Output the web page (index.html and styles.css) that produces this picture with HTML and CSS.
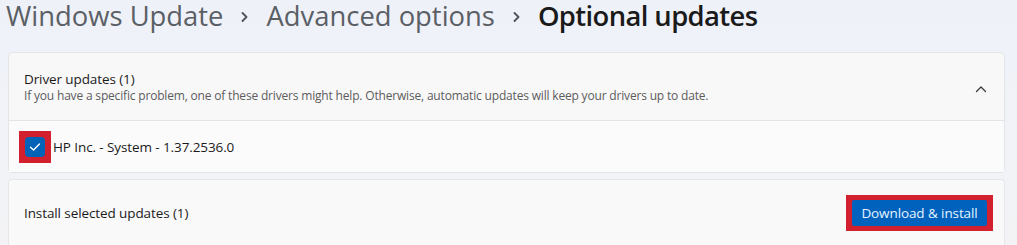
FILE: index.html
```html
<!DOCTYPE html>
<html lang="en">
<head>
<meta charset="utf-8">
<title>Optional updates</title>
<link rel="stylesheet" href="styles.css">
</head>
<body>
<div class="page">
  <h1 class="crumbs">
    <span class="crumb">Windows Update</span>
    <svg class="sep" width="7" height="10" viewBox="0 0 7 10"><path d="M1.5 1 L5.5 5 L1.5 9" fill="none" stroke="#4f535a" stroke-width="1.8" stroke-linecap="round" stroke-linejoin="round"/></svg>
    <span class="crumb">Advanced options</span>
    <svg class="sep" width="7" height="10" viewBox="0 0 7 10"><path d="M1.5 1 L5.5 5 L1.5 9" fill="none" stroke="#4f535a" stroke-width="1.8" stroke-linecap="round" stroke-linejoin="round"/></svg>
    <span class="crumb current">Optional updates</span>
  </h1>

  <section class="expander">
    <div class="exp-head">
      <div class="exp-text">
        <div class="exp-title">Driver updates (1)</div>
        <div class="exp-desc">If you have a specific problem, one of these drivers might help. Otherwise, automatic updates will keep your drivers up to date.</div>
      </div>
      <svg class="chev" width="12" height="8" viewBox="0 0 12 8"><path d="M1.5 6.5 L6 2 L10.5 6.5" fill="none" stroke="#3a3a3a" stroke-width="1.3" stroke-linecap="round" stroke-linejoin="round"/></svg>
    </div>
    <div class="exp-item">
      <span class="hl hl-check">
        <span class="checkbox">
          <svg width="12" height="10" viewBox="0 0 12 10"><path d="M1.5 5.2 L4.5 8 L10.5 2" fill="none" stroke="#ffffff" stroke-width="1.4" stroke-linecap="round" stroke-linejoin="round"/></svg>
        </span>
      </span>
      <span class="item-label">HP Inc. - System - 1.37.2536.0</span>
    </div>
  </section>

  <section class="card">
    <span class="card-label">Install selected updates (1)</span>
    <span class="hl hl-btn"><button class="btn">Download &amp; install</button></span>
  </section>
</div>
</body>
</html>
```

FILE: styles.css
```css
html, body {
  margin: 0;
  padding: 0;
}
body {
  width: 1017px;
  height: 245px;
  overflow: hidden;
  background: linear-gradient(180deg, #eef1f8 0%, #f1f3f8 60%, #f3f3f5 100%);
  font-family: "Open Sans", "Noto Sans", sans-serif;
  color: #1b1b1b;
}
.page {
  padding: 0 12px 0 8px;
}
.crumbs {
  margin: 0 0 0 -2px;
  height: 52px;
  display: flex;
  align-items: flex-start;
  font-size: 27.4px;
  font-weight: 400;
  line-height: 30px;
  padding-top: 1px;
  box-sizing: border-box;
}
.crumb {
  color: #5b5f66;
}
.crumb.current {
  color: #1a1a1a;
  font-weight: 600;
  letter-spacing: -0.6px;
}
.sep {
  margin: 11px 18px 0 18px;
  flex: none;
}
.expander {
  background: #f8f8f9;
  border: 1px solid #e4e5e8;
  border-radius: 4px;
}
.exp-head {
  height: 67px;
  display: flex;
  align-items: center;
  padding: 0 17px 0 15px;
}
.exp-text {
  flex: 1;
}
.exp-title {
  font-size: 13.5px;
  line-height: 18px;
  color: #1b1b1b;
  letter-spacing: -0.1px;
}
.exp-desc {
  font-size: 12px;
  line-height: 16px;
  color: #5c5c5c;
  letter-spacing: -0.18px;
}
.chev {
  flex: none;
  margin-top: 4px;
}
.exp-item {
  height: 51px;
  border-top: 1px solid #e3e4e7;
  background: #fbfbfc;
  display: flex;
  align-items: center;
  padding-left: 10px;
}
.hl {
  background: #d2202f;
  display: inline-flex;
  align-items: center;
  justify-content: center;
}
.hl-check {
  width: 32px;
  height: 32px;
}
.checkbox {
  width: 20px;
  height: 20px;
  border-radius: 4px;
  background: #0063b8;
  display: inline-flex;
  align-items: center;
  justify-content: center;
}
.item-label {
  margin-left: 2px;
  font-size: 13.5px;
  letter-spacing: -0.1px;
  color: #1b1b1b;
}
.card {
  margin-top: 6px;
  height: 67px;
  background: #f9f9fa;
  border: 1px solid #e6e7ea;
  border-bottom: none;
  border-radius: 4px 4px 0 0;
  display: flex;
  justify-content: space-between;
  padding: 15px 11px 0 15px;
  box-sizing: border-box;
}
.card-label {
  align-self: flex-start;
  line-height: 36px;
  font-size: 13.5px;
  letter-spacing: -0.1px;
  color: #1b1b1b;
}
.hl-btn {
  align-self: flex-start;
  width: 147px;
  height: 36px;
}
.btn {
  width: 135px;
  height: 26px;
  border: none;
  border-radius: 2px;
  background: #0062bd;
  color: #e6f4ff;
  font-family: "Open Sans", "Noto Sans", sans-serif;
  font-size: 13.5px;
  letter-spacing: -0.1px;
  padding: 0;
  line-height: 26px;
}
```
